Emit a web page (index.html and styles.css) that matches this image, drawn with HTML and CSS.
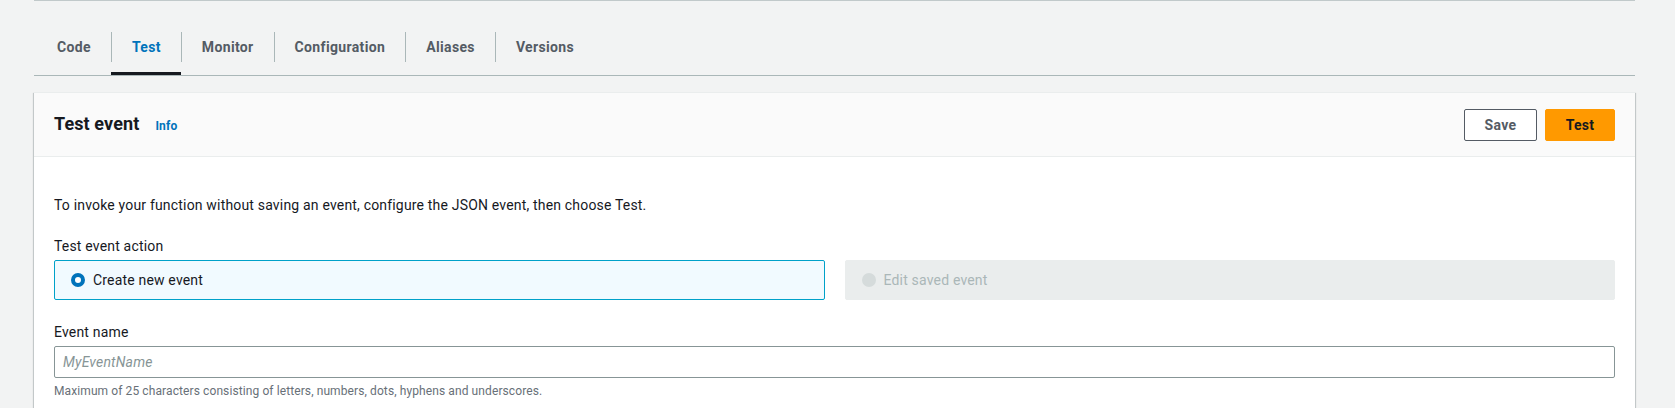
FILE: index.html
```html
<!DOCTYPE html>
<html lang="en">
<head>
<meta charset="utf-8">
<title>Test event</title>
<link rel="stylesheet" href="styles.css">
</head>
<body>
<div class="page">
  <div class="topline"></div>
  <nav class="tabs">
    <div class="tab"><span class="tab-label first">Code</span></div>
    <div class="tab active"><span class="tab-label">Test</span></div>
    <div class="tab"><span class="tab-label">Monitor</span></div>
    <div class="tab"><span class="tab-label">Configuration</span></div>
    <div class="tab"><span class="tab-label">Aliases</span></div>
    <div class="tab"><span class="tab-label">Versions</span></div>
  </nav>
  <section class="panel">
    <header class="panel-header">
      <div class="title-wrap">
        <h2 class="title">Test event</h2>
        <a class="info">Info</a>
      </div>
      <div class="actions">
        <button class="btn btn-normal">Save</button>
        <button class="btn btn-primary">Test</button>
      </div>
    </header>
    <div class="panel-body">
      <p class="intro">To invoke your function without saving an event, configure the JSON event, then choose Test.</p>
      <div class="field">
        <div class="label">Test event action</div>
        <div class="tiles">
          <div class="tile selected"><span class="radio on"></span><span>Create new event</span></div>
          <div class="tile disabled"><span class="radio off"></span><span>Edit saved event</span></div>
        </div>
      </div>
      <div class="field field-name">
        <div class="label">Event name</div>
        <div class="input"><span class="placeholder">MyEventName</span></div>
        <div class="hint">Maximum of 25 characters consisting of letters, numbers, dots, hyphens and underscores.</div>
      </div>
    </div>
  </section>
</div>
</body>
</html>
```
FILE: styles.css
```css
html, body {
  margin: 0;
  padding: 0;
  background: #f2f3f3;
}
body {
  font-family: "Roboto", "Liberation Sans", Arial, sans-serif;
  font-size: 14px;
  line-height: 22px;
  letter-spacing: 0.18px;
  color: #16191f;
}
.page {
  padding: 0 40px 40px 34px;
}
.topline {
  height: 1px;
  background: #c1c9ca;
}
.tabs {
  display: flex;
  margin-top: 27px;
  padding-left: 2px;
  border-bottom: 1px solid #aab7b8;
}
.tab {
  padding: 4px 0 10px;
  border-bottom: 3px solid transparent;
}
.tab.active {
  border-bottom-color: #16191f;
}
.tab-label {
  display: block;
  height: 30px;
  line-height: 30px;
  padding: 0 20px;
  border-left: 1px solid #aab7b8;
  font-weight: 700;
  letter-spacing: 0.35px;
  color: #545b64;
}
.tab-label.first {
  border-left-color: transparent;
}
.tab.active .tab-label {
  color: #0073bb;
}
.panel {
  margin-top: 16px;
  background: #fff;
  border-top: 1px solid #eaeded;
  box-shadow: 0 1px 1px 0 rgba(0, 28, 36, 0.3), 1px 1px 1px 0 rgba(0, 28, 36, 0.15), -1px 1px 1px 0 rgba(0, 28, 36, 0.15);
}
.panel-header {
  display: flex;
  align-items: center;
  justify-content: space-between;
  height: 63px;
  padding: 0 20px;
  background: #fafafa;
  border-bottom: 1px solid #eaeded;
}
.title-wrap {
  display: flex;
  align-items: baseline;
}
.title {
  margin: 0;
  font-size: 18px;
  line-height: 24px;
  font-weight: 700;
  letter-spacing: 0.1px;
  color: #16191f;
}
.info {
  margin-left: 16px;
  font-size: 12px;
  font-weight: 700;
  color: #0073bb;
}
.actions {
  display: flex;
  gap: 8px;
}
.btn {
  font-family: inherit;
  font-size: 14px;
  font-weight: 700;
  letter-spacing: 0.3px;
  line-height: 22px;
  height: 32px;
  padding: 4px 0;
  border-radius: 2px;
  cursor: pointer;
}
.btn-normal {
  background: #fff;
  color: #545b64;
  border: 1px solid #545b64;
  width: 73px;
}
.btn-primary {
  background: #ff9900;
  color: #16191f;
  border: 1px solid #ff9900;
  width: 70px;
}
.panel-body {
  padding: 37px 20px 40px;
}
.intro {
  margin: 0;
}
.field {
  margin-top: 19px;
}
.field-name {
  margin-top: 21px;
}
.label {
  margin-bottom: 3px;
  color: #16191f;
}
.tiles {
  display: grid;
  grid-template-columns: 1fr 1fr;
  gap: 20px;
}
.tile {
  display: flex;
  align-items: center;
  gap: 8px;
  height: 40px;
  box-sizing: border-box;
  padding: 0 16px;
  border-radius: 2px;
}
.tile.selected {
  background: #f1faff;
  border: 1px solid #00a1c9;
}
.tile.disabled {
  background: #eaeded;
  border: 1px solid #eaeded;
  color: #aab7b8;
}
.radio {
  width: 14px;
  height: 14px;
  box-sizing: border-box;
  border-radius: 50%;
  flex: none;
}
.radio.on {
  border: 4px solid #0073bb;
  background: #fff;
}
.radio.off {
  background: #d5dbdb;
}
.input {
  height: 32px;
  box-sizing: border-box;
  border: 1px solid #879596;
  border-radius: 2px;
  padding: 4px 8px;
  background: #fff;
}
.placeholder {
  font-style: italic;
  color: #879596;
}
.hint {
  margin-top: 5px;
  font-size: 12px;
  line-height: 16px;
  letter-spacing: 0.1px;
  color: #687078;
}
```
